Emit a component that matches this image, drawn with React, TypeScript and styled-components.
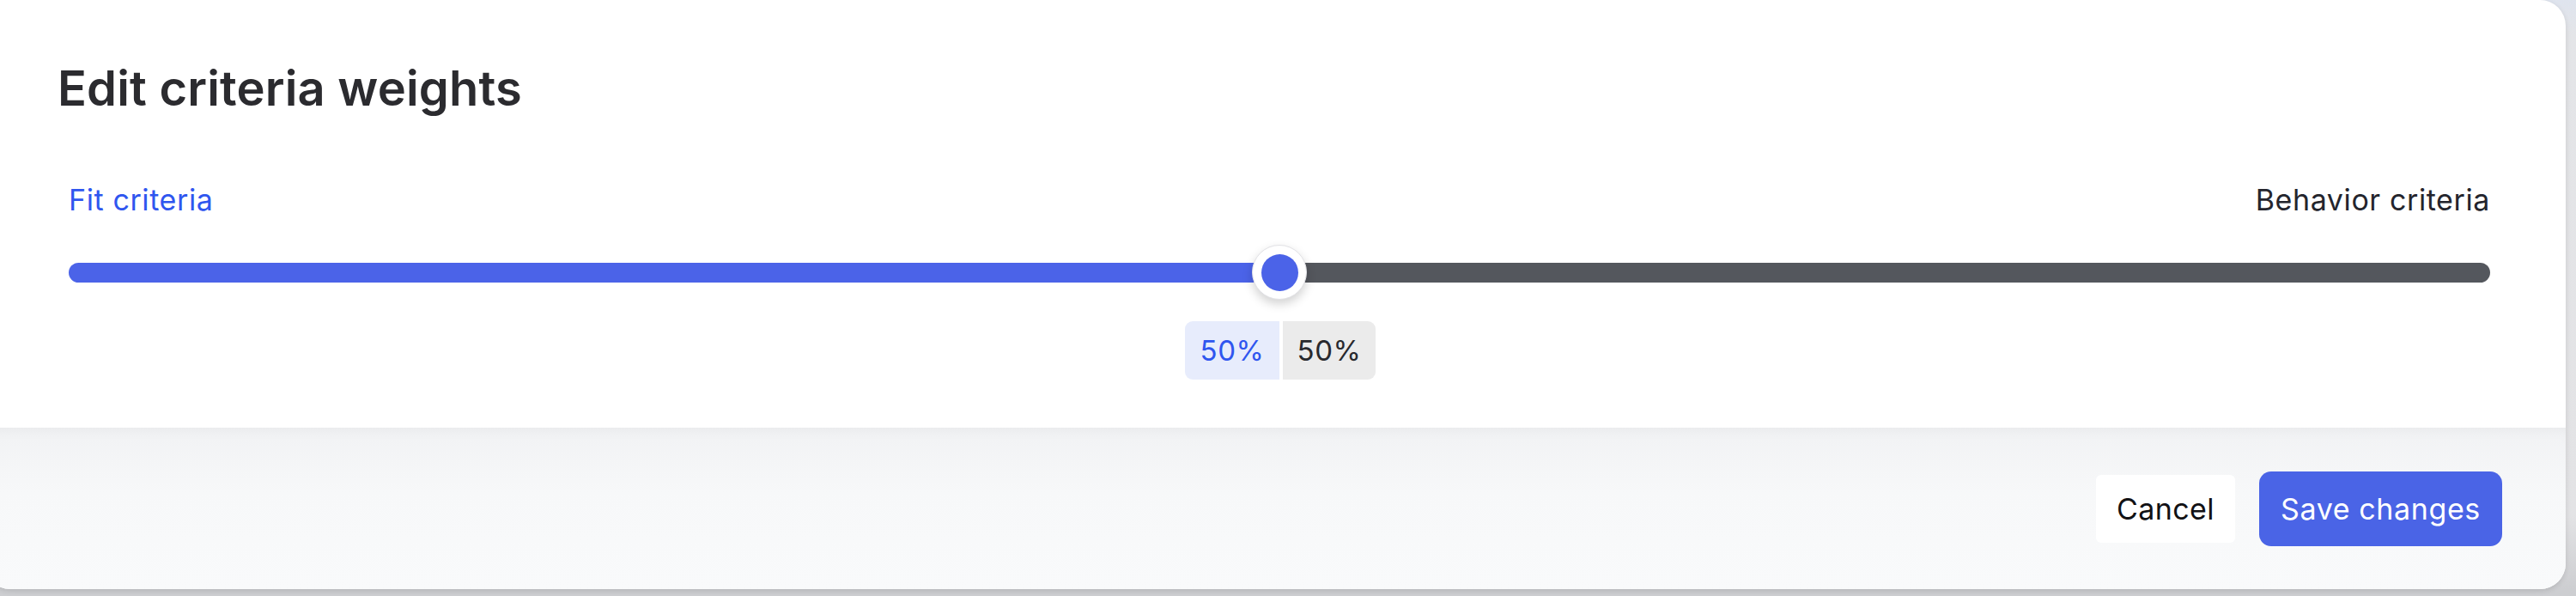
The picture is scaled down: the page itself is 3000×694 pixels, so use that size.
import React from 'react'
import styled, { createGlobalStyle } from 'styled-components'

const GlobalStyle = createGlobalStyle`
  html, body {
    margin: 0;
    padding: 0;
    background: #d2d3d6;
    font-family: Inter, "Noto Sans", sans-serif;
    -webkit-font-smoothing: antialiased;
  }
`

const Screen = styled.div`
  width: 3000px;
  height: 694px;
  overflow: hidden;
  background: linear-gradient(180deg, #dfe4ee 0px, #e4e5e8 40px, #e3e3e5 600px, #cdced1 686px);
`

const Dialog = styled.div`
  margin-left: -18px;
  width: 3006px;
  height: 686px;
  background: #ffffff;
  border-radius: 0 30px 30px 30px;
  box-shadow: 0 2px 6px rgba(0, 0, 0, 0.12);
  overflow: hidden;
  display: flex;
  flex-direction: column;
`

const Body = styled.div`
  flex: 1;
  padding: 70px 88px 0 85px;
  display: flex;
  flex-direction: column;
`

const Title = styled.h1`
  margin: 0;
  font-size: 56px;
  line-height: 66px;
  font-weight: 600;
  color: #2b2b2f;
  letter-spacing: 0.2px;
`

const SliderSection = styled.div`
  margin-top: 77px;
  padding-left: 13px;
  display: flex;
  flex-direction: column;
`

const LabelRow = styled.div`
  display: flex;
  justify-content: space-between;
  font-size: 34px;
  line-height: 40px;
`

const Label = styled.span<{ $active?: boolean }>`
  color: ${({ $active }) => ($active ? '#2f56ef' : '#24252d')};
  font-weight: 400;
  letter-spacing: 0.6px;
`

const SliderArea = styled.div`
  margin-top: 32px;
  height: 64px;
  display: flex;
  align-items: center;
  position: relative;
`

const Track = styled.div`
  width: 100%;
  height: 23px;
  border-radius: 12px;
`

const Thumb = styled.div`
  position: absolute;
  top: 0;
  width: 64px;
  height: 64px;
  margin-left: -32px;
  box-sizing: border-box;
  border-radius: 50%;
  background: #ffffff;
  border: 1px solid #e2e2e6;
  box-shadow: 0 5px 12px rgba(0, 0, 0, 0.18);
  display: flex;
  align-items: center;
  justify-content: center;

  &::after {
    content: '';
    width: 43px;
    height: 43px;
    border-radius: 50%;
    background: #4b63e8;
  }
`

const Split = styled.div`
  margin-top: 25px;
  align-self: center;
  display: flex;
  gap: 4px;
  margin-left: 2px;
`

const Share = styled.div<{ $active?: boolean }>`
  height: 68px;
  width: ${({ $active }) => ($active ? '110px' : '108px')};
  display: flex;
  align-items: center;
  justify-content: center;
  font-size: 33px;
  letter-spacing: 0.5px;
  color: ${({ $active }) => ($active ? '#2f56ef' : '#28292e')};
  background: ${({ $active }) => ($active ? '#e7ecfc' : '#ebebeb')};
  border-radius: ${({ $active }) => ($active ? '9px 0 0 9px' : '0 9px 9px 0')};
`

const Footer = styled.div`
  height: 188px;
  background: linear-gradient(180deg, #f1f2f4 0%, #f7f8f9 40%, #f9fafb 100%);
  box-shadow: inset 0 12px 18px -12px rgba(0, 0, 0, 0.05);
  display: flex;
  align-items: center;
  justify-content: flex-end;
  gap: 28px;
  padding-right: 74px;
`

const Button = styled.button<{ $primary?: boolean }>`
  font-family: Inter, "Noto Sans", sans-serif;
  font-size: 34px;
  border: none;
  cursor: pointer;
  padding: 0;
  width: ${({ $primary }) => ($primary ? '283px' : '162px')};
  height: ${({ $primary }) => ($primary ? '87px' : '79px')};
  border-radius: ${({ $primary }) => ($primary ? '14px' : '6px')};
  background: ${({ $primary }) => ($primary ? '#4a64e6' : '#ffffff')};
  color: ${({ $primary }) => ($primary ? '#ffffff' : '#111114')};
  letter-spacing: ${({ $primary }) => ($primary ? '0.6px' : '0.4px')};
`

export default function App() {
  const fit = 50
  const behavior = 100 - fit

  return (
    <>
      <GlobalStyle />
      <Screen>
        <Dialog>
          <Body>
            <Title>Edit criteria weights</Title>
            <SliderSection>
              <LabelRow>
                <Label $active>Fit criteria</Label>
                <Label>Behavior criteria</Label>
              </LabelRow>
              <SliderArea>
                <Track
                  style={{
                    background: `linear-gradient(90deg, #4b63e8 ${fit}%, #54575d ${fit}%)`,
                  }}
                />
                <Thumb style={{ left: `${fit}%` }} />
              </SliderArea>
              <Split>
                <Share $active>{fit}%</Share>
                <Share>{behavior}%</Share>
              </Split>
            </SliderSection>
          </Body>
          <Footer>
            <Button>Cancel</Button>
            <Button $primary>Save changes</Button>
          </Footer>
        </Dialog>
      </Screen>
    </>
  )
}
